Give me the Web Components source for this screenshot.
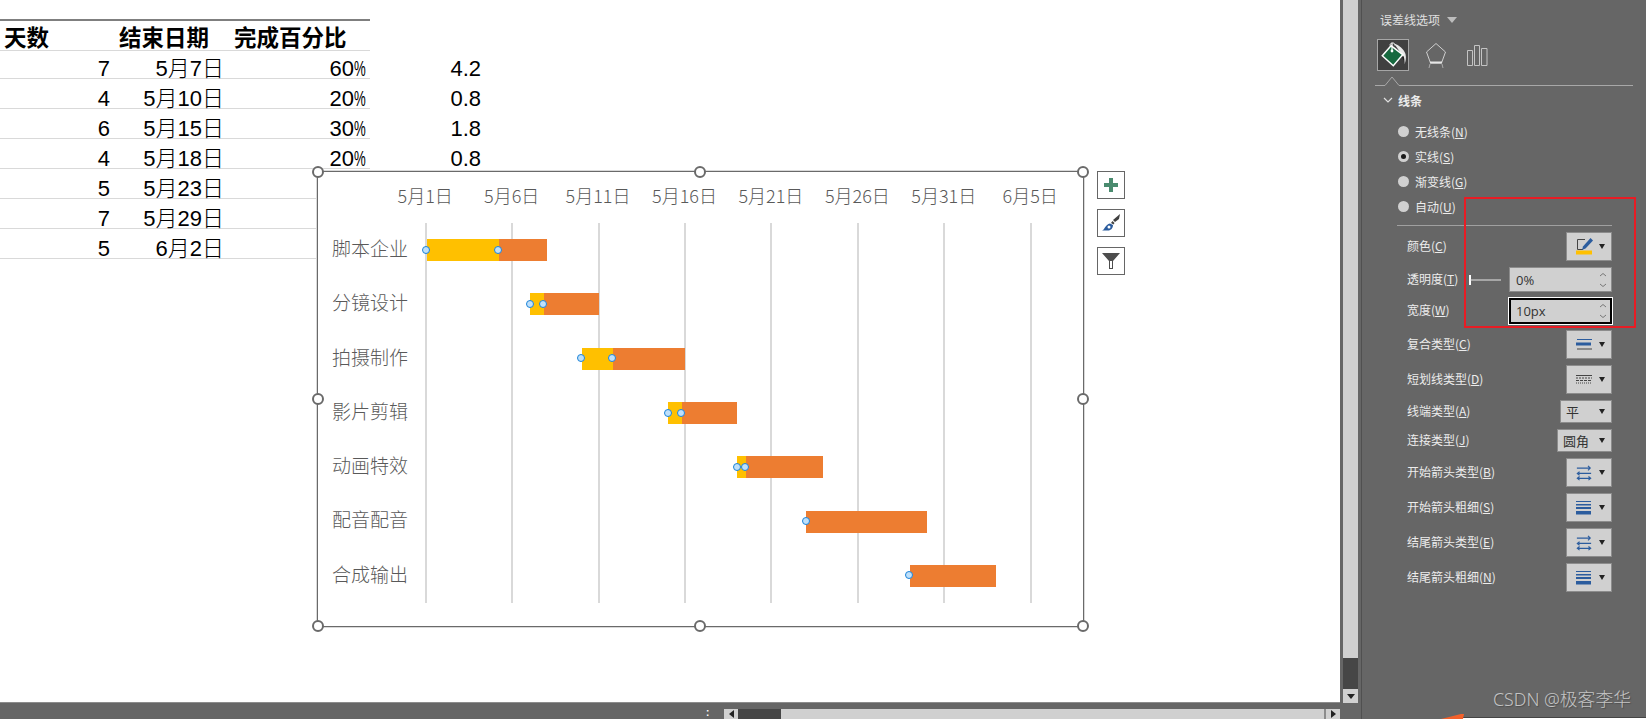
<!DOCTYPE html>
<html>
<head>
<meta charset="utf-8">
<style>
html, body { margin: 0; padding: 0; height: 719px; overflow: hidden; background: #666; }
body { font-family: "Noto Sans CJK SC", "Noto Sans", sans-serif; }
</style>
</head>
<body>
<excel-window>
  <sheet-table slot="sheet"></sheet-table>
  <gantt-chart slot="sheet"></gantt-chart>
  <format-pane slot="pane"></format-pane>
</excel-window>
<script>
const CJK = '"Noto Sans CJK SC", "Noto Sans", sans-serif';

class ExcelWindow extends HTMLElement {
    constructor() {
        super();
        this._root = this.attachShadow({ mode: "open" });
    }
    connectedCallback() {
        this._root.innerHTML = `
            <style>
                :host { display: flex; width: 1646px; height: 719px; background: #666; }
                .left { width: 1361px; display: flex; flex-direction: column; }
                .top { display: flex; height: 703px; }
                .sheet { position: relative; width: 1340px; background: #fff; border-bottom: 1px solid #8c8c8c; box-sizing: border-box; overflow: hidden; }
                .vbar { margin-left: 3px; width: 15px; display: flex; flex-direction: column; background: #d0d0d0; }
                .vbar .fill { flex: 1; }
                .vbar .thumb { height: 31px; background: #464646; }
                .vbar .btn { height: 14px; display: flex; align-items: center; justify-content: center; }
                .bottom { flex: 1; display: flex; align-items: flex-end; height: 16px; }
                .dots { margin-left: 706px; width: 18px; height: 10px; color: #fff; font: bold 10px/8px "Liberation Sans", sans-serif; }
                .hbar { display: flex; width: 616px; height: 10px; background: #d0d0d0; }
                .hbar .btn { width: 14px; display: flex; align-items: center; justify-content: center; box-sizing: border-box; }
                .hbar .thumb { width: 43px; background: #464646; }
                .hbar .fill { flex: 1; border-right: 2px solid #8c8c8c; }
                .tri-d { width: 0; height: 0; border: 4px solid transparent; border-top: 5px solid #222; border-bottom: 0; }
                .tri-l { width: 0; height: 0; border: 4px solid transparent; border-right: 5px solid #222; border-left: 0; }
                .tri-r { width: 0; height: 0; border: 4px solid transparent; border-left: 5px solid #222; border-right: 0; }
                .pane { flex: 1; border-left: 1px solid #505050; position: relative; }
            </style>
            <div class="left">
                <div class="top">
                    <div class="sheet"><slot name="sheet"></slot></div>
                    <div class="vbar">
                        <div class="fill"></div>
                        <div class="thumb"></div>
                        <div class="btn"><div class="tri-d"></div></div>
                    </div>
                </div>
                <div class="bottom">
                    <div class="dots">:</div>
                    <div class="hbar">
                        <div class="btn"><div class="tri-l"></div></div>
                        <div class="thumb"></div>
                        <div class="fill"></div>
                        <div class="btn"><div class="tri-r"></div></div>
                    </div>
                </div>
            </div>
            <div class="pane"><slot name="pane"></slot></div>
        `;
    }
}
window.customElements.define("excel-window", ExcelWindow);

class SheetTable extends HTMLElement {
    constructor() {
        super();
        this._root = this.attachShadow({ mode: "open" });
        this._rows = [
            ["7", "5月7日", "60", "4.2"],
            ["4", "5月10日", "20", "0.8"],
            ["6", "5月15日", "30", "1.8"],
            ["4", "5月18日", "20", "0.8"],
            ["5", "5月23日", "", ""],
            ["7", "5月29日", "", ""],
            ["5", "6月2日", "", ""]
        ];
    }
    connectedCallback() {
        const cells = this._rows.map(r => `
            <div class="c a">${r[0]}</div>
            <div class="c b">${r[1]}</div>
            <div class="c p">${r[2]}${r[2] ? `<span class="pct">%</span>` : ""}</div>
            <div class="c d">${r[3]}</div>
        `).join("");
        this._root.innerHTML = `
            <style>
                :host { display: block; padding-top: 19px; font-family: "Liberation Sans", ${CJK}; color: #000; }
                .grid { display: grid; grid-template-columns: 114px 112px 144px 114px; grid-auto-rows: 30px; width: 484px; }
                .h { font-size: 22.5px; font-weight: 700; line-height: 27px; padding-top: 4px; border-top: 2px solid #7f7f7f; border-bottom: 1px solid #d9d9d9; height: 32px; box-sizing: border-box; margin-bottom: -2px; white-space: nowrap; }
                .c { font-size: 22px; font-weight: 300; line-height: 21px; height: 30px; text-align: right; padding: 9px 4px 0 0; border-bottom: 1px solid #d9d9d9; box-sizing: border-box; white-space: nowrap; }
                .b { padding-right: 2px; }
                .d { border-bottom: 0; padding-right: 3px; }
                .pct { display: inline-block; width: 12px; transform: scaleX(.6); transform-origin: left; text-align: left; }
                .blank { border: 0; }
            </style>
            <div class="grid">
                <div class="h" style="padding-left:4px">天数</div>
                <div class="h" style="padding-left:5px">结束日期</div>
                <div class="h" style="padding-left:8px">完成百分比</div>
                <div class="blank"></div>
                ${cells}
            </div>
        `;
    }
}
window.customElements.define("sheet-table", SheetTable);

class GanttChart extends HTMLElement {
    constructor() {
        super();
        this._root = this.attachShadow({ mode: "open" });
        this._ticks = ["5月1日", "5月6日", "5月11日", "5月16日", "5月21日", "5月26日", "5月31日", "6月5日"];
        // name, start day, days, yellow part in days
        this._tasks = [
            ["脚本企业", 0, 7, 4.2],
            ["分镜设计", 6, 4, 0.8],
            ["拍摄制作", 9, 6, 1.8],
            ["影片剪辑", 14, 4, 0.8],
            ["动画特效", 18, 5, 0.5],
            ["配音配音", 22, 7, 0],
            ["合成输出", 28, 5, 0]
        ];
    }
    connectedCallback() {
        const ticks = this._ticks.map(t => `<div class="tick">${t}</div>`).join("");
        const lines = this._ticks.map(() => `<i></i>`).join("");
        const rows = this._tasks.map(t => `
            <div class="cat">${t[0]}</div>
            <div class="slot">
                <div class="bar" style="margin-left:calc(${t[1]} * var(--day)); width:calc(${t[2]} * var(--day))">
                    <div class="done" style="width:calc(${t[3]} * var(--day))"></div>
                    <b class="dot" style="left:-4.500px"></b>
                    ${t[3] ? `<b class="dot" style="left:calc(${t[3]} * var(--day) - 4.500px)"></b>` : ""}
                </div>
            </div>
        `).join("");
        const handles = [["0", "0"], ["50%", "0"], ["100%", "0"], ["0", "50%"], ["100%", "50%"], ["0", "100%"], ["50%", "100%"], ["100%", "100%"]]
            .map(h => `<span class="handle" style="left:${h[0]};top:${h[1]}"></span>`).join("");
        this._root.innerHTML = `
            <style>
                :host { --day: 17.26px; position: absolute; left: 317px; top: 171px; width: 764.5px; height: 454px; background: #fff; border: 1.5px solid #6a6a6a; box-shadow: 0 0 0 1px #d9d9d9; box-sizing: content-box; font-family: ${CJK}; color: #595959; }
                .axis { display: flex; height: 51px; padding-left: 64px; }
                .tick { width: 86.43px; text-align: center; font-size: 18px; font-weight: 300; line-height: 47px; white-space: nowrap; flex: none; }
                .plot { position: relative; display: grid; grid-template-columns: 108.500px 1fr; grid-auto-rows: 54.3px; }
                .lines { position: absolute; left: 106.700px; top: 0; width: 607px; bottom: 0; display: flex; justify-content: space-between; }
                .lines i { width: 2px; background: #d9d9d9; }
                .cat { position: relative; padding-left: 14px; font-size: 19px; font-weight: 300; line-height: 50px; white-space: nowrap; }
                .slot { position: relative; display: flex; align-items: center; }
                .bar { position: relative; height: 22px; background: #ed7d31; }
                .done { height: 100%; background: #ffc000; }
                .dot { position: absolute; top: 6.500px; width: 6px; height: 6px; border-radius: 50%; background: #bfe0fa; border: 1.5px solid #1c83d8; }
                .handle { position: absolute; width: 8px; height: 8px; margin: -6px 0 0 -6px; border-radius: 50%; background: #fff; border: 2px solid #6a6a6a; }
                .tools { position: absolute; left: 779px; top: -1px; display: flex; flex-direction: column; gap: 10px; }
                .tool { width: 28px; height: 28px; box-sizing: border-box; background: #fff; border: 1px solid #666; display: flex; align-items: center; justify-content: center; }
            </style>
            <div class="axis">${ticks}</div>
            <div class="plot">
                <div class="lines">${lines}</div>
                ${rows}
            </div>
            ${handles}
            <div class="tools">
                <div class="tool"><svg width="16" height="16" viewBox="0 0 16 16"><path d="M6 1h4v5h5v4h-5v5H6v-5H1V6h5z" fill="#4a8b6f"/></svg></div>
                <div class="tool"><svg width="20" height="20" viewBox="0 0 20 20"><path d="M19 1l-1 5-4 3-2-2z" fill="#404040"/><path d="M11.500 8l2 2-1 1.500-2.500-1.500z" fill="#404040"/><path d="M9 10.500l3 1.500c0 3-2 5.500-5 5.500H1c3-1 3-6 8-7z" fill="#2b5c9e"/><circle cx="8" cy="14" r="1.500" fill="#fff"/></svg></div>
                <div class="tool"><svg width="20" height="20" viewBox="0 0 20 20"><path d="M1 2h18l-7 8v8H8v-8z" fill="#4d4d4d"/><path d="M9 10h2v7H9z" fill="#fff"/></svg></div>
            </div>
        `;
    }
}
window.customElements.define("gantt-chart", GanttChart);

const ICONS = {
    color: `<svg width="17" height="17" viewBox="0 0 17 17"><path d="M9 1.500H1.500v10H7" fill="none" stroke="#444" stroke-width="1"/><path d="M14.500 0L17 2.500 9.500 10.500 6 12l1-3.500z" fill="#2b5c9e"/><rect x="0" y="12.500" width="16" height="4" fill="#ffc000"/></svg>`,
    compound: `<svg width="16" height="11" viewBox="0 0 16 11"><path d="M1 .5h15" stroke="#2b5c9e" stroke-width="1"/><rect x="0" y="3.500" width="15" height="3" fill="#2b5c9e"/><path d="M1 10h15" stroke="#444" stroke-width="1"/></svg>`,
    dash: `<svg width="16" height="10" viewBox="0 0 16 10"><path d="M0 .5h16" stroke="#444" stroke-width="1"/><path d="M0 3h16" stroke="#444" stroke-width="1" stroke-dasharray="2 1"/><path d="M0 5.500h16" stroke="#444" stroke-width="1" stroke-dasharray="3 1"/><path d="M0 8h16" stroke="#444" stroke-width="1" stroke-dasharray="1 1"/></svg>`,
    arrows: `<svg width="16" height="16" viewBox="0 0 18 18"><path d="M1 3.500h15M13.500 1l2.500 2.500L13.500 6" fill="none" stroke="#2b5c9e" stroke-width="1.300"/><path d="M3 9.500h14M4 7.500L1.500 9.500 4 11.500" fill="none" stroke="#2b5c9e" stroke-width="1.300"/><path d="M2 15h14M4 13l-2.500 2L4 17M14 13l2.500 2L14 17" fill="none" stroke="#2b5c9e" stroke-width="1.300"/></svg>`,
    weight: `<svg width="15" height="14" viewBox="0 0 15 14"><rect y="0" width="15" height="1" fill="#2b5c9e"/><rect y="3" width="15" height="1.500" fill="#2b5c9e"/><rect y="6" width="15" height="2" fill="#2b5c9e"/><rect y="10" width="15" height="3.500" fill="#2b5c9e"/></svg>`
};

class DropButton extends HTMLElement {
    constructor() {
        super();
        this._root = this.attachShadow({ mode: "open" });
    }
    connectedCallback() {
        const icon = this.getAttribute("icon");
        this._root.innerHTML = `
            <style>
                :host { display: block; width: 46px; height: 100%; box-sizing: border-box; background: #d0d0d0; border: 1px solid #8c8c8c; }
                .in { display: flex; align-items: center; height: 100%; padding-left: 9px; color: #333; font-size: 13px; }
                .tx { line-height: 1; }
                .ic { display: flex; width: 21px; }
                .arrow { width: 0; height: 0; border: 3.500px solid transparent; border-top: 5px solid #222; border-bottom: 0; margin-left: 2px; }
                :host([text]) .in { padding-left: 5px; justify-content: space-between; padding-right: 6px; }
                :host([text]) .arrow { margin-left: 0; }
            </style>
            <div class="in">
                ${icon ? `<span class="ic">${ICONS[icon]}</span>` : `<span class="tx">${this.getAttribute("text")}</span>`}
                <span class="arrow"></span>
            </div>
        `;
    }
}
window.customElements.define("drop-button", DropButton);

class SpinInput extends HTMLElement {
    constructor() {
        super();
        this._root = this.attachShadow({ mode: "open" });
    }
    connectedCallback() {
        this._root.innerHTML = `
            <style>
                :host { display: flex; align-items: center; justify-content: space-between; width: 103px; height: 100%; box-sizing: border-box; background: #d0d0d0; border: 1px solid #8c8c8c; padding: 0 4px 0 6px; color: #333; font: 13px "Open Sans", "Liberation Sans", sans-serif; }
                :host([focus]) { border: 1px solid #000; outline: 1px solid #fff; outline-offset: 0; box-shadow: inset 0 0 0 1px #000; }
                svg { display: block; }
            </style>
            <slot></slot>
            <svg width="8" height="16" viewBox="0 0 8 16"><path d="M1 4l3-2.500L7 4M1 12l3 2.500L7 12" fill="none" stroke="#777" stroke-width="1"/></svg>
        `;
    }
}
window.customElements.define("spin-input", SpinInput);

class PaneRow extends HTMLElement {
    constructor() {
        super();
        this._root = this.attachShadow({ mode: "open" });
    }
    connectedCallback() {
        this._root.innerHTML = `
            <style>
                :host { display: flex; align-items: center; justify-content: space-between; }
                .l { font-size: 12px; color: #ececec; white-space: nowrap; margin-bottom: 3px; }
            </style>
            <span class="l"><slot name="label"></slot></span>
            <slot></slot>
        `;
    }
}
window.customElements.define("pane-row", PaneRow);

class PaneRadio extends HTMLElement {
    constructor() {
        super();
        this._root = this.attachShadow({ mode: "open" });
    }
    connectedCallback() {
        this._root.innerHTML = `
            <style>
                :host { display: flex; align-items: center; height: 25px; font-size: 12px; color: #ececec; white-space: nowrap; }
                .r { width: 11px; height: 11px; border-radius: 50%; background: #d0d0d0; margin-right: 6px; display: flex; align-items: center; justify-content: center; }
                :host([checked]) .r::after { content: ""; width: 5px; height: 5px; border-radius: 50%; background: #1a1a1a; }
            </style>
            <span class="r"></span><slot></slot>
        `;
    }
}
window.customElements.define("pane-radio", PaneRadio);

class FormatPane extends HTMLElement {
    constructor() {
        super();
        this._root = this.attachShadow({ mode: "open" });
    }
    connectedCallback() {
        this._root.innerHTML = `
            <style>
                :host { display: block; height: 719px; padding-top: 11px; box-sizing: border-box; font-family: ${CJK}; color: #ececec; position: relative; overflow: hidden; }
                .title { display: flex; align-items: center; height: 17px; margin-left: 18px; font-size: 12px; color: #e0e0e0; gap: 7px; }
                .title i { width: 0; height: 0; border: 5.500px solid transparent; border-top: 6px solid #bdbdbd; border-bottom: 0; }
                .tabs { display: flex; align-items: center; height: 32px; margin: 11px 0 0 15px; }
                .sel { width: 32px; height: 32px; box-sizing: border-box; background: #404040; border: 1px solid #a6a6a6; }
                .tabs svg { display: block; }
                .rule { display: block; margin: 5px 0 0 13px; }
                .sect { display: flex; align-items: center; height: 20px; margin: 4px 0 0 21px; font-size: 12px; font-weight: 700; color: #ececec; gap: 5px; }
                .radios { margin: 9px 0 0 36px; }
                .sep { height: 1px; background: #a0a0a0; margin: 6px 34px 0 35px; }
                .ctl { display: flex; flex-direction: column; gap: 6px; margin: 6px 34px 0 45px; }
                .red { position: absolute; left: 102px; top: 197px; width: 168px; height: 127px; border: 2px solid #e81c24; }
                .mark { position: absolute; left: 131px; top: 686px; font-size: 17.8px; line-height: 26px; color: #c4c4c4; white-space: nowrap; text-shadow: 1px 1px 1px #4d4d4d; font-family: "Noto Sans", ${CJK}; font-weight: 300; }
                .strip { position: absolute; left: 101px; right: 0; top: 717px; height: 2px; background: #fff; border-top: 1px solid #444; box-sizing: border-box; }
                .arrow { position: absolute; left: 79px; top: 714px; display: block; }
                u { text-underline-offset: 1px; }
                .slider { display: block; margin-left: auto; margin-right: 8px; }
            </style>
            <div class="title">误差线选项<i></i></div>
            <div class="tabs">
                <div class="sel">
                    <svg width="30" height="30" viewBox="0 0 30 30">
                        <path d="M16 3.500C21 5 26 9 27.500 14c1 4 0 8-1 10-1-4-1-7-3-10z" fill="#e8e8e8"/>
                        <path d="M25.500 16c1 2 1 5 1 8-1-3-1.500-5-2.500-7z" fill="#1c1c1c"/>
                        <path d="M13 5.700L24.700 14.700 15.300 25.700 4.300 15.700z" fill="#17693f" stroke="#fff" stroke-width="1.500"/>
                        <path d="M14 3v8" stroke="#fff" stroke-width="1.200"/><circle cx="14" cy="11" r="1.400" fill="#fff"/>
                        <path d="M12 5.500c0-3.500 5-3.500 5 0" fill="none" stroke="#fff" stroke-width="1"/>
                    </svg>
                </div>
                <svg style="margin-left:16px" width="22" height="25" viewBox="0 0 22 25"><path d="M11 .5l9.500 8.500-4 11H5.500l-4-11z" fill="none" stroke="#cfcfcf" stroke-width="1"/><path d="M5 19.500h12" stroke="#e6e6e6" stroke-width="2"/><path d="M5 21l-1 4M17 21l1 4" stroke="#aaa" stroke-width="1"/></svg>
                <svg style="margin-left:20px" width="21" height="21" viewBox="0 0 21 21"><path d="M.5 5.500h5v15h-5zM7.500 .5h5v20h-5zM14.500 3.500h5.500v17h-5.500z" fill="none" stroke="#c4c4c4" stroke-width="1"/></svg>
            </div>
            <svg class="rule" width="258" height="10" viewBox="0 0 258 10"><path d="M0 9.500h10L17 1l7 8.500h234" fill="none" stroke="#a8a8a8" stroke-width="1"/></svg>
            <div class="sect"><svg width="10" height="7" viewBox="0 0 10 7"><path d="M1 1l4 4 4-4" fill="none" stroke="#e0e0e0" stroke-width="1.200"/></svg>线条</div>
            <div class="radios">
                <pane-radio>无线条(<u>N</u>)</pane-radio>
                <pane-radio checked>实线(<u>S</u>)</pane-radio>
                <pane-radio>渐变线(<u>G</u>)</pane-radio>
                <pane-radio>自动(<u>U</u>)</pane-radio>
            </div>
            <div class="sep"></div>
            <div class="ctl">
                <pane-row style="height:29px"><span slot="label">颜色(<u>C</u>)</span><drop-button icon="color"></drop-button></pane-row>
                <pane-row style="height:25px"><span slot="label">透明度(<u>T</u>)</span>
                    <svg class="slider" width="32" height="10" viewBox="0 0 32 10"><path d="M1 0v10" stroke="#fff" stroke-width="2"/><path d="M1 5h31" stroke="#e6e6e6" stroke-width="1"/></svg>
                    <spin-input>0%</spin-input></pane-row>
                <pane-row style="height:26px"><span slot="label">宽度(<u>W</u>)</span><spin-input focus>10px</spin-input></pane-row>
                <pane-row style="height:29px"><span slot="label">复合类型(<u>C</u>)</span><drop-button icon="compound"></drop-button></pane-row>
                <pane-row style="height:29px"><span slot="label">短划线类型(<u>D</u>)</span><drop-button icon="dash"></drop-button></pane-row>
                <pane-row style="height:23px"><span slot="label">线端类型(<u>A</u>)</span><drop-button text="平" style="width:52px"></drop-button></pane-row>
                <pane-row style="height:23px"><span slot="label">连接类型(<u>J</u>)</span><drop-button text="圆角" style="width:55px"></drop-button></pane-row>
                <pane-row style="height:29px"><span slot="label">开始箭头类型(<u>B</u>)</span><drop-button icon="arrows"></drop-button></pane-row>
                <pane-row style="height:29px"><span slot="label">开始箭头粗细(<u>S</u>)</span><drop-button icon="weight"></drop-button></pane-row>
                <pane-row style="height:29px"><span slot="label">结尾箭头类型(<u>E</u>)</span><drop-button icon="arrows"></drop-button></pane-row>
                <pane-row style="height:29px"><span slot="label">结尾箭头粗细(<u>N</u>)</span><drop-button icon="weight"></drop-button></pane-row>
            </div>
            <div class="red"></div>
            <div class="mark">CSDN @极客李华</div>
            <div class="strip"></div>
            <svg class="arrow" width="23" height="5" viewBox="0 0 23 5"><path d="M0 5L20 0l3 0-1 5z" fill="#f4612b"/></svg>
        `;
    }
}
window.customElements.define("format-pane", FormatPane);
</script>
</body>
</html>
